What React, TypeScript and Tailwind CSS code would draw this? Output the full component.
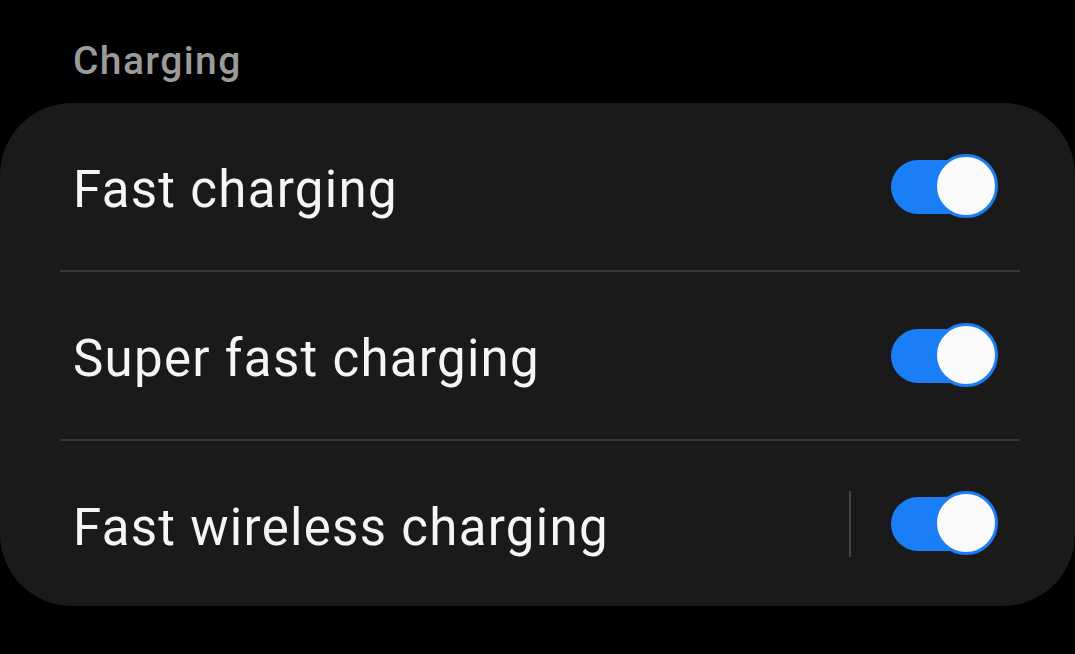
import React from "react";

function Toggle() {
  return (
    <div className="relative w-[108px] h-[66px] flex items-center">
      <div className="ml-[1px] w-[96px] h-[54px] rounded-full bg-[#1a7ef7]" />
      <div className="absolute right-0 top-0 w-[64px] h-[64px] rounded-full bg-[#fafafa] border-[3px] border-[#1a7ef7]" />
    </div>
  );
}

function Row({ label, divider, sep, last }: { label: string; divider?: boolean; sep?: boolean; last?: boolean }) {
  return (
    <div className="flex flex-col">
      <div className={last ? "h-[165px] flex flex-row items-center pl-[73px] pr-[77px] pt-[1px]" : "h-[167px] flex flex-row items-center pl-[73px] pr-[77px]"}>
        <span className="flex-1 text-[51px] tracking-[1.3px] text-[#f5f5f5] leading-none pt-[6px]">{label}</span>
        {sep && <div className="w-[2px] h-[66px] bg-[#444444] mr-[39px]" />}
        <Toggle />
      </div>
      {divider && <div className="ml-[60px] mr-[55px] h-[2px] bg-[#383838]" />}
    </div>
  );
}

export default function App() {
  return (
    <div className="w-[1075px] h-[654px] bg-black flex flex-col overflow-hidden" style={{ fontFamily: "Roboto, 'Noto Sans', sans-serif" }}>
      <div className="h-[103px] pl-[73px] pt-[42px]">
        <span className="block text-[39px] tracking-[1.4px] font-medium text-[#9b9b9b] leading-none">Charging</span>
      </div>
      <div className="bg-[#1a1a1a] rounded-[72px] flex flex-col">
        <Row label="Fast charging" divider />
        <Row label="Super fast charging" divider />
        <Row label="Fast wireless charging" sep last />
      </div>
    </div>
  );
}
